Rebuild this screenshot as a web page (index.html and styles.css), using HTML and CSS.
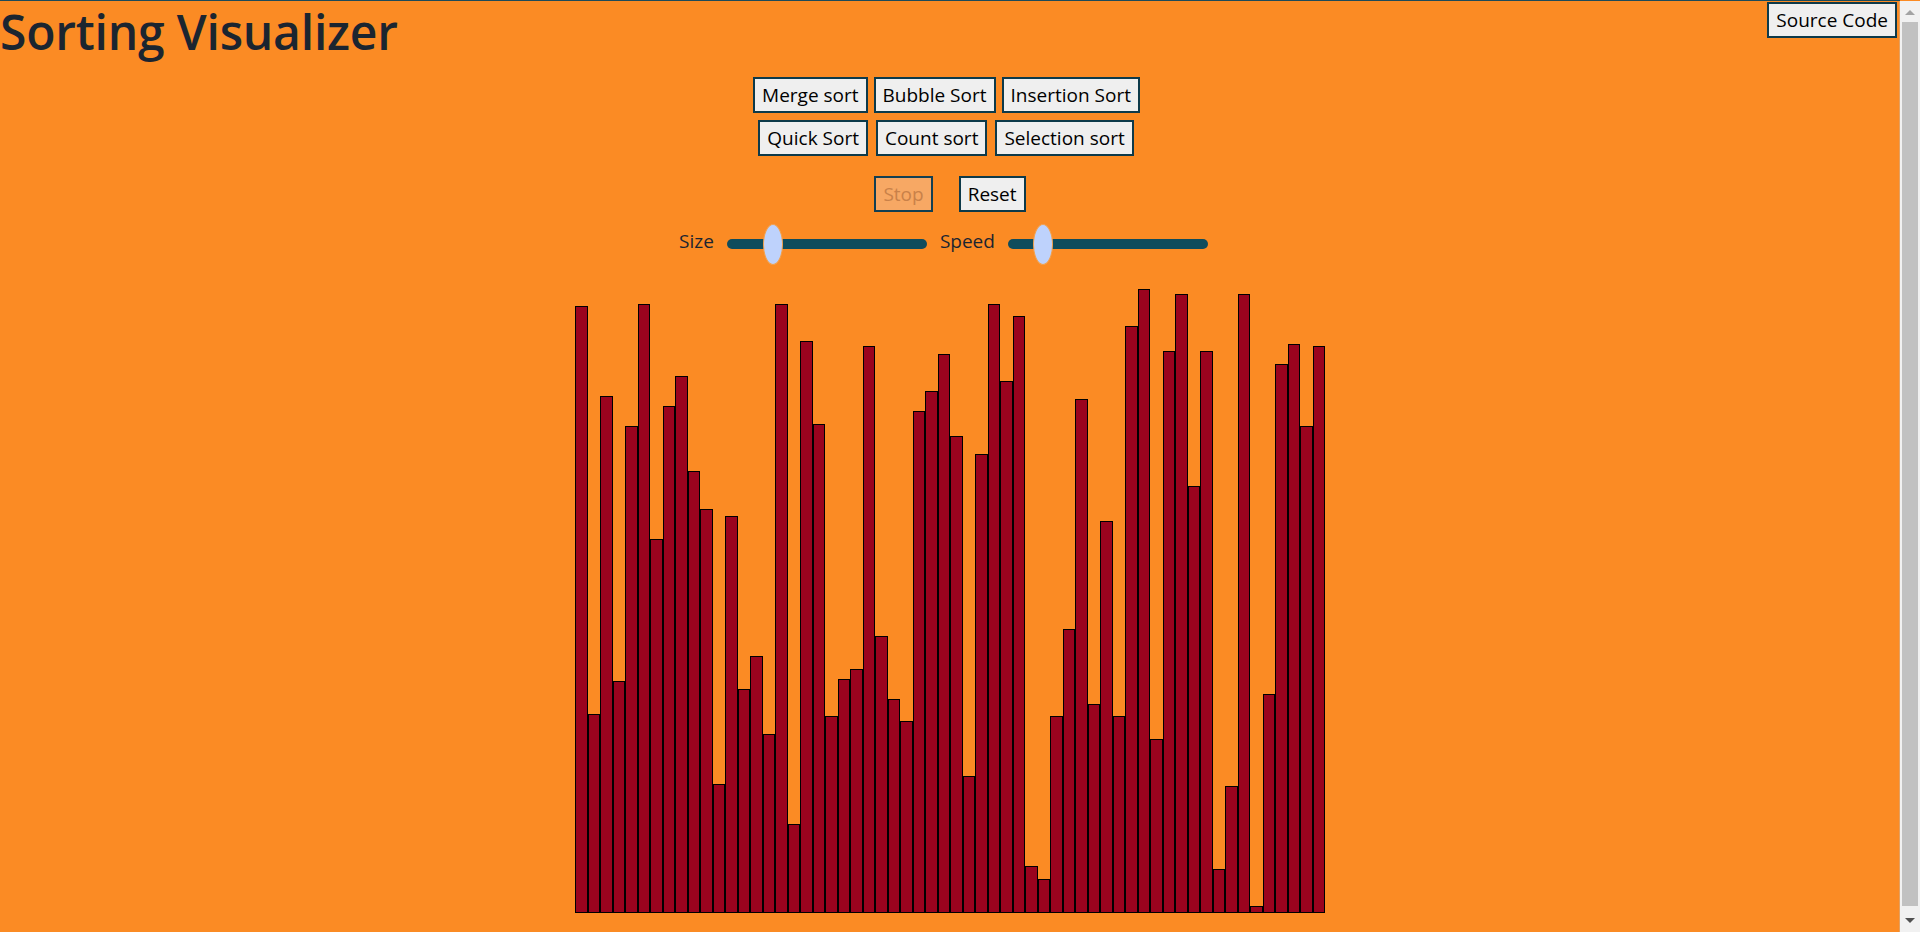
FILE: index.html
```html
<!DOCTYPE html>
<html lang="en">
<head>
<meta charset="utf-8">
<title>Sorting Visualizer</title>
<link rel="stylesheet" href="styles.css">
</head>
<body>
<header class="top">
  <h1 class="title">Sorting Visualizer</h1>
  <button class="btn source-btn">Source Code</button>
</header>
<section class="algos">
  <div class="algo-row row-a">
    <button class="btn">Merge sort</button>
    <button class="btn">Bubble Sort</button>
    <button class="btn">Insertion Sort</button>
  </div>
  <div class="algo-row row-b">
    <button class="btn">Quick Sort</button>
    <button class="btn">Count sort</button>
    <button class="btn">Selection sort</button>
  </div>
</section>
<div class="actions">
  <button class="btn btn-disabled" disabled>Stop</button>
  <button class="btn">Reset</button>
</div>
<div class="sliders">
  <label class="slider-label">Size</label>
  <input class="range" type="range" min="0" max="100" value="20">
  <label class="slider-label">Speed</label>
  <input class="range" type="range" min="0" max="100" value="14">
</div>
<main class="chart">
  <div class="bars">
    <div class="bar" style="height:607px"></div>
    <div class="bar" style="height:199px"></div>
    <div class="bar" style="height:517px"></div>
    <div class="bar" style="height:232px"></div>
    <div class="bar" style="height:487px"></div>
    <div class="bar" style="height:609px"></div>
    <div class="bar" style="height:374px"></div>
    <div class="bar" style="height:507px"></div>
    <div class="bar" style="height:537px"></div>
    <div class="bar" style="height:442px"></div>
    <div class="bar" style="height:404px"></div>
    <div class="bar" style="height:129px"></div>
    <div class="bar" style="height:397px"></div>
    <div class="bar" style="height:224px"></div>
    <div class="bar" style="height:257px"></div>
    <div class="bar" style="height:179px"></div>
    <div class="bar" style="height:609px"></div>
    <div class="bar" style="height:89px"></div>
    <div class="bar" style="height:572px"></div>
    <div class="bar" style="height:489px"></div>
    <div class="bar" style="height:197px"></div>
    <div class="bar" style="height:234px"></div>
    <div class="bar" style="height:244px"></div>
    <div class="bar" style="height:567px"></div>
    <div class="bar" style="height:277px"></div>
    <div class="bar" style="height:214px"></div>
    <div class="bar" style="height:192px"></div>
    <div class="bar" style="height:502px"></div>
    <div class="bar" style="height:522px"></div>
    <div class="bar" style="height:559px"></div>
    <div class="bar" style="height:477px"></div>
    <div class="bar" style="height:137px"></div>
    <div class="bar" style="height:459px"></div>
    <div class="bar" style="height:609px"></div>
    <div class="bar" style="height:532px"></div>
    <div class="bar" style="height:597px"></div>
    <div class="bar" style="height:47px"></div>
    <div class="bar" style="height:34px"></div>
    <div class="bar" style="height:197px"></div>
    <div class="bar" style="height:284px"></div>
    <div class="bar" style="height:514px"></div>
    <div class="bar" style="height:209px"></div>
    <div class="bar" style="height:392px"></div>
    <div class="bar" style="height:197px"></div>
    <div class="bar" style="height:587px"></div>
    <div class="bar" style="height:624px"></div>
    <div class="bar" style="height:174px"></div>
    <div class="bar" style="height:562px"></div>
    <div class="bar" style="height:619px"></div>
    <div class="bar" style="height:427px"></div>
    <div class="bar" style="height:562px"></div>
    <div class="bar" style="height:44px"></div>
    <div class="bar" style="height:127px"></div>
    <div class="bar" style="height:619px"></div>
    <div class="bar" style="height:7px"></div>
    <div class="bar" style="height:219px"></div>
    <div class="bar" style="height:549px"></div>
    <div class="bar" style="height:569px"></div>
    <div class="bar" style="height:487px"></div>
    <div class="bar" style="height:567px"></div>
  </div>
</main>
<div class="scrollbar" aria-hidden="true">
  <span class="sb-arrow sb-up"></span>
  <span class="sb-thumb"></span>
  <span class="sb-arrow sb-down"></span>
</div>
</body>
</html>
```
FILE: styles.css
```css
* { box-sizing: border-box; }

html { background: #fb8b24; }

body {
  margin: 0 20px 0 0;
  background: #fb8b24;
  border-top: 1px solid #1d4a59;
  font-family: "Open Sans", "Noto Sans", Arial, sans-serif;
  color: #1b2530;
  padding-bottom: 34px;
}

.top {
  display: flex;
  justify-content: space-between;
  align-items: flex-start;
  height: 76px;
}

.title {
  margin: 0;
  font-size: 48px;
  font-weight: 600;
  line-height: 62px;
  letter-spacing: -0.2px;
  color: #1b2530;
}

.btn {
  font-family: "Open Sans", "Noto Sans", Arial, sans-serif;
  font-size: 19px;
  line-height: 26px;
  height: 36px;
  padding: 3px 7px;
  background: #efefef;
  color: #000;
  border: 2px solid #0d3a4a;
  border-radius: 0;
  margin: 0;
}

.source-btn {
  margin-top: 1px;
  margin-right: 3px;
}

.algos {
  display: flex;
  flex-direction: column;
  gap: 7px;
}

.algo-row {
  display: flex;
  justify-content: center;
  gap: 6px;
  padding-right: 7px;
}

.row-b { gap: 8px; padding-right: 8px; }

.actions {
  display: flex;
  justify-content: center;
  gap: 26px;
  margin-top: 20px;
}

.btn-disabled {
  background: #f7a864;
  color: #c98149;
  border-color: #123f52;
}

.sliders {
  display: flex;
  justify-content: center;
  align-items: center;
  gap: 13px;
  padding-right: 13px;
  height: 52px;
  margin-top: 6px;
}

.slider-label {
  font-size: 19px;
  line-height: 26px;
  color: #1b2530;
  margin-top: -6px;
}

.range {
  -webkit-appearance: none;
  appearance: none;
  width: 200px;
  height: 10px;
  margin: 0;
  border-radius: 5px;
  background: #0f4c5c;
  outline: none;
}

.range::-webkit-slider-thumb {
  -webkit-appearance: none;
  appearance: none;
  width: 20px;
  height: 41px;
  border-radius: 50%;
  background: #bed2fc;
  border: 1px solid #f3a04a;
}

.chart {
  display: flex;
  justify-content: center;
  margin-top: 13px;
}

.bars {
  display: flex;
  align-items: flex-end;
  width: 750px;
  height: 630px;
}

.bar {
  flex: 1 1 0;
  background: #9a031e;
  border: 1px solid #000;
}

.scrollbar {
  position: fixed;
  top: 1px;
  right: 0;
  width: 21px;
  height: 100vh;
  background: #f1f1f1;
  border-left: 1px solid #e4a060;
}

.sb-thumb {
  position: absolute;
  left: 2px;
  right: 2px;
  top: 21px;
  bottom: 27px;
  background: #c1c1c1;
}

.sb-arrow {
  position: absolute;
  left: 50%;
  width: 0;
  height: 0;
  margin-left: -5px;
  border-left: 5px solid transparent;
  border-right: 5px solid transparent;
}

.sb-up {
  top: 9px;
  border-bottom: 5px solid #a3a3a3;
}

.sb-down {
  bottom: 10px;
  border-top: 5px solid #505050;
}
```
